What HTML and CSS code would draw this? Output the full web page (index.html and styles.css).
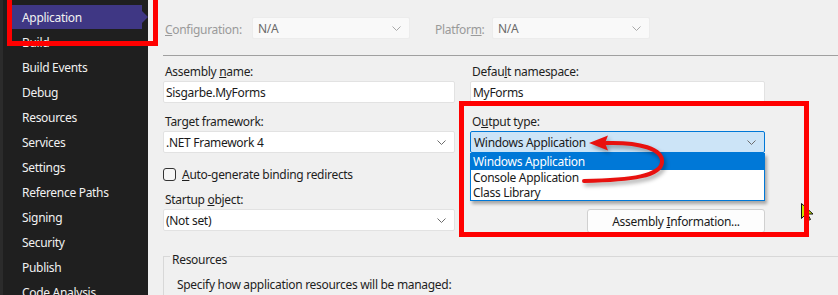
FILE: index.html
```html
<!DOCTYPE html>
<html lang="en">

<head>
    <meta charset="UTF-8">
    <meta name="viewport" content="width=device-width, initial-scale=1.0">
    <title>Project Properties - Application</title>
    <link rel="stylesheet" href="styles.css">
</head>

<body>
    <div class="ventana">
        <nav class="lateral">
            <ul class="paginas">
                <li class="activa">Application</li>
                <li>Build</li>
                <li>Build Events</li>
                <li>Debug</li>
                <li>Resources</li>
                <li>Services</li>
                <li>Settings</li>
                <li>Reference Paths</li>
                <li>Signing</li>
                <li>Security</li>
                <li>Publish</li>
                <li>Code Analysis</li>
            </ul>
        </nav>

        <main class="editor">
            <div class="barra">
                <span class="etiqueta-barra config"><u>C</u>onfiguration:</span>
                <div class="combo apagado">
                    <span>N/A</span>
                    <svg class="flecha" width="9" height="5" viewBox="0 0 9 5"><polyline points="0.5,0.5 4.5,4.5 8.5,0.5" /></svg>
                </div>
                <span class="etiqueta-barra plataforma">Platfor<u>m</u>:</span>
                <div class="combo apagado">
                    <span>N/A</span>
                    <svg class="flecha" width="9" height="5" viewBox="0 0 9 5"><polyline points="0.5,0.5 4.5,4.5 8.5,0.5" /></svg>
                </div>
            </div>
            <div class="linea"></div>

            <div class="columnas">
                <div class="columna izquierda">
                    <div class="campo">
                        <label>Assembly <u>n</u>ame:</label>
                        <div class="caja">Sisgarbe.MyForms</div>
                    </div>
                    <div class="campo">
                        <label>Tar<u>g</u>et framework:</label>
                        <div class="combo">
                            <span>.NET Framework 4</span>
                            <svg class="flecha" width="9" height="5" viewBox="0 0 9 5"><polyline points="0.5,0.5 4.5,4.5 8.5,0.5" /></svg>
                        </div>
                    </div>
                    <div class="casilla">
                        <span class="cuadro"></span>
                        <span><u>A</u>uto-generate binding redirects</span>
                    </div>
                    <div class="campo">
                        <label>Startup <u>o</u>bject:</label>
                        <div class="combo">
                            <span>(Not set)</span>
                            <svg class="flecha" width="9" height="5" viewBox="0 0 9 5"><polyline points="0.5,0.5 4.5,4.5 8.5,0.5" /></svg>
                        </div>
                    </div>
                </div>

                <div class="columna derecha">
                    <div class="campo">
                        <label>Defau<u>l</u>t namespace:</label>
                        <div class="caja">MyForms</div>
                    </div>
                    <div class="campo">
                        <label>O<u>u</u>tput type:</label>
                        <div class="combo abierto">
                            <span>Windows Application</span>
                            <svg class="flecha" width="9" height="5" viewBox="0 0 9 5"><polyline points="0.5,0.5 4.5,4.5 8.5,0.5" /></svg>
                            <ul class="lista">
                                <li class="marcado">Windows Application</li>
                                <li>Console Application</li>
                                <li>Class Library</li>
                            </ul>
                        </div>
                    </div>
                    <button class="boton">Assembly <u>I</u>nformation...</button>
                </div>
            </div>

            <div class="grupo">
                <span class="titulo-grupo">Resources</span>
                <p class="texto-grupo">Specify how application resources will be managed:</p>
            </div>
        </main>

        <!-- marcas dibujadas encima de la captura -->
        <svg class="marcas" width="838" height="295" viewBox="0 0 838 295">
            <g class="sombra">
                <path d="M606 143 C640 142, 663 149, 662 162 C661 176, 632 180, 584 181" fill="none" stroke="#e8110f" stroke-width="4" stroke-linecap="round" />
                <polygon points="589,143 608,135.5 605,143 608,150.5" fill="#e8110f" />
            </g>
            <path d="M801.5 203.5 L801.5 218.5 L805 215 L808 220.5 L810.5 219.5 L807.5 214 L813 214 Z" fill="#c6e600" stroke="#111" stroke-width="1" />
        </svg>
        <div class="marco marco-menu"></div>
        <div class="marco marco-salida"></div>
    </div>
</body>

</html>
```

FILE: styles.css
```css
body {
    margin: 0;
    font-family: "Noto Sans", "Open Sans", sans-serif;
    font-size: 12px;
    letter-spacing: -0.3px;
    color: #1e1e1e;
    background-color: #f0f0f0;
}

.ventana {
    position: relative;
    display: flex;
    width: 838px;
    height: 295px;
    overflow: hidden;
}

/* menu de la izquierda */
.lateral {
    width: 145px;
    flex-shrink: 0;
    background-color: #1f1f1f;
    border-left: 3px solid #2b2b2b;
}

.paginas {
    list-style: none;
    margin: 0;
    padding: 5px 0 0 9px;
}

.paginas li {
    position: relative;
    box-sizing: border-box;
    width: 130px;
    height: 25px;
    padding: 1px 0 0 10px;
    line-height: 24px;
    color: #f1f1f1;
}

.paginas .activa {
    height: 24px;
    line-height: 23px;
    margin-bottom: 1px;
    background-color: #3f3784;
}

.paginas .activa::after {
    content: "";
    position: absolute;
    left: 100%;
    top: 6px;
    border-top: 6px solid transparent;
    border-bottom: 6px solid transparent;
    border-left: 6px solid #3f3784;
}

/* zona de la derecha */
.editor {
    flex: 1;
    padding: 17px 0 0 15px;
}

.barra {
    display: flex;
    align-items: center;
    height: 22px;
}

.etiqueta-barra {
    padding: 2px 0 0 2px;
    color: #9a9a9a;
}

.config {
    width: 87px;
}

.plataforma {
    width: 57px;
    margin-left: 23px;
}

.linea {
    margin-top: 16px;
    border-top: 1px solid #a0a0a0;
}

.columnas {
    display: flex;
    gap: 15px;
    padding-top: 7px;
}

.izquierda {
    width: 292px;
}

.derecha {
    width: 295px;
    display: flex;
    flex-direction: column;
}

.campo {
    margin-bottom: 10px;
}

.campo label {
    display: block;
    line-height: 16px;
    padding: 1px 0 0 2px;
    margin-bottom: 1px;
}

.caja,
.combo {
    box-sizing: border-box;
    height: 22px;
    line-height: 20px;
    padding: 1px 8px 0 2px;
    background-color: #fff;
    border: 1px solid #e2e2e2;
    border-radius: 2px;
    color: #1a1a1a;
}

.combo {
    position: relative;
    display: flex;
    align-items: center;
}

.flecha {
    margin-left: auto;
    fill: none;
    stroke: #6c6c6c;
    stroke-width: 1;
}

.combo.apagado {
    width: 158px;
    padding-left: 5px;
    background-color: #f9f9f9;
    border-color: #ececec;
    color: #6a6a6a;
}

.combo.apagado .flecha {
    stroke: #a8a8a8;
}

.combo.abierto {
    padding-left: 3px;
    background-color: #cce4f7;
    border-color: #0078d7;
}

.lista {
    position: absolute;
    left: -1px;
    right: -1px;
    top: 21px;
    margin: 0;
    padding: 0;
    list-style: none;
    background-color: #fff;
    border: 1px solid #0078d7;
    box-shadow: 2px 3px 3px rgba(0, 0, 0, 0.3);
}

.lista li {
    height: 15px;
    line-height: 15px;
    padding-left: 2px;
}

.lista .marcado {
    height: 16px;
    line-height: 16px;
    background-color: #0078d7;
    color: #fff;
}

/* el margen de arriba se junta con el del campo anterior */
.casilla {
    display: flex;
    align-items: center;
    gap: 6px;
    height: 16px;
    margin: 13px 0 9px;
}

.cuadro {
    width: 11px;
    height: 11px;
    border: 1px solid #333;
    border-radius: 3px;
    background-color: #f6f6f6;
}

.boton {
    align-self: flex-end;
    width: 178px;
    height: 24px;
    margin-top: 46px;
    font-family: inherit;
    font-size: 12px;
    letter-spacing: -0.3px;
    color: #1a1a1a;
    background-color: #fdfdfd;
    border: 1px solid #d0d0d0;
    border-radius: 3px;
}

.grupo {
    margin: 15px -20px 0 0;
    height: 80px;
    border-top: 1px solid #d8d8d8;
    border-left: 1px solid #d8d8d8;
}

.titulo-grupo {
    display: block;
    width: fit-content;
    margin: -5px 0 0 6px;
    padding: 0 2px;
    line-height: 16px;
    background-color: #f0f0f0;
}

.texto-grupo {
    margin: 9px 0 0 13px;
    line-height: 16px;
}

/* marcas rojas de la captura */
.marcas {
    position: absolute;
    left: 0;
    top: 0;
    pointer-events: none;
}

.sombra {
    filter: drop-shadow(2px 3px 2px rgba(0, 0, 0, 0.35));
}

.marco {
    position: absolute;
    border: 5px solid #ff0000;
    pointer-events: none;
}

.marco-menu {
    left: 7px;
    top: -10px;
    width: 141px;
    height: 46px;
}

.marco-salida {
    left: 459px;
    top: 101px;
    width: 340px;
    height: 126px;
}
```
